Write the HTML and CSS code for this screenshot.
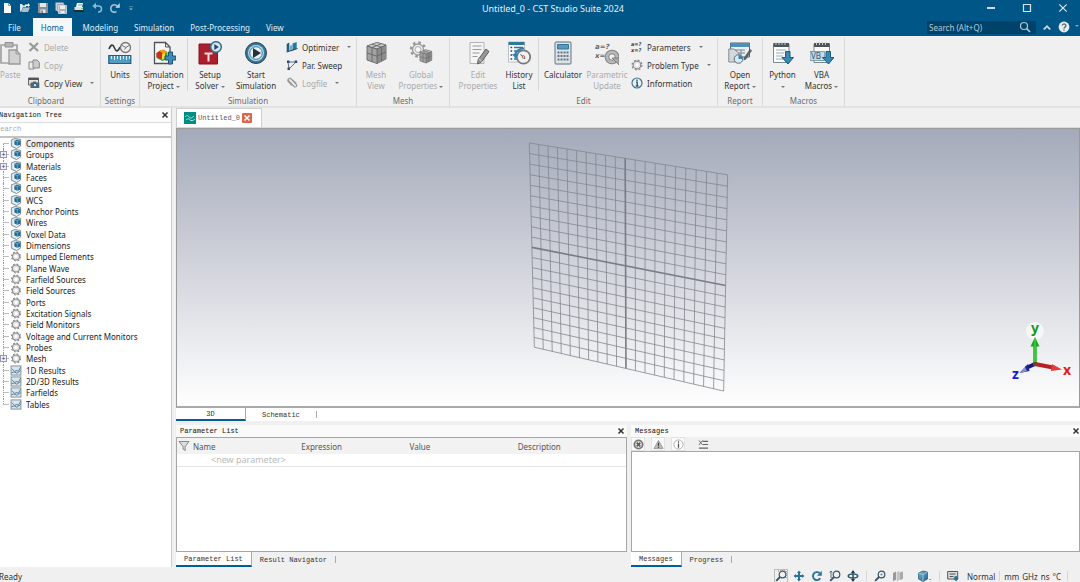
FILE: index.html
```html
<!DOCTYPE html>
<html lang="en">
<head>
<meta charset="utf-8">
<title>Untitled_0 - CST Studio Suite 2024</title>
<link rel="stylesheet" href="styles.css">
</head>
<body>
<svg class="defs" aria-hidden="true">
  <defs>
    <linearGradient id="steel" x1="0" y1="0" x2="1" y2="1"><stop offset="0" stop-color="#7db4d2"/><stop offset="1" stop-color="#1d628c"/></linearGradient>
  </defs>
  <symbol id="cube" viewBox="0 0 12 12">
    <path d="M1 2l4-1.400 6 1v7.200L6.500 11.500 1 9z" fill="#eaf1f5" stroke="#67747d" stroke-width=".9"/>
    <path d="M4.200 3l2.600-1.200 4 .8v4.800L7.300 8.500 4.200 7z" fill="#226b94"/>
    <path d="M4.200 3l3.200.9 3.400-1.300M7.400 4v4.400" fill="none" stroke="#8cc3dd" stroke-width=".7"/>
    <path d="M1.500 2.600v6L6 10.800" fill="none" stroke="#9fb3c0" stroke-width=".6"/>
  </symbol>
  <symbol id="gear" viewBox="0 0 12 12">
    <circle cx="6" cy="6" r="4.900" fill="none" stroke="#8b8b8b" stroke-width="1.300" stroke-dasharray="1.950 1.898"/>
    <circle cx="6" cy="6" r="3.800" fill="#f4f4f4" stroke="#8b8b8b" stroke-width="1.200"/>
    <circle cx="6" cy="6" r="2.300" fill="#fff" stroke="#c4c4c4" stroke-width=".6"/>
  </symbol>
  <symbol id="plot" viewBox="0 0 12 12">
    <rect x=".6" y="1" width="10.800" height="10" fill="#dbe4ea" stroke="#73808a" stroke-width=".9"/>
    <path d="M1.500 4l3 3L7 6l1.500 1L11 2.500M1 8.500l3-1 3 1.500 4-3" fill="none" stroke="#39708e" stroke-width=".9"/>
  </symbol>
  <symbol id="meshcube" viewBox="0 0 24 24">
    <path d="M3 5l10-3.500 9 2.500v14L13 22.500 3 19z" fill="#a2a2a2" stroke="#707070"/>
    <path d="M3 5l10-3.500L22 4l-9 4z" fill="#cecece" stroke="#777" stroke-width=".7"/>
    <path d="M13 8l9-4v14l-9 4.500z" fill="#8b8b8b"/>
    <path d="M3 5l10 3 9-4M13 8v14.500M3 12l10 3.200 9-4.300M8 6.500V21M17.500 6v14M8 3.300L17.500 6M17.500 2.700L8 6.500" fill="none" stroke="#666" stroke-width=".9"/>
  </symbol>
  <symbol id="lens" viewBox="0 0 12 12">
    <circle cx="7.500" cy="4.500" r="3.300" fill="none" stroke="currentColor" stroke-width="1.200"/>
    <path d="M5 7L1.200 10.800" stroke="currentColor" stroke-width="1.900"/>
  </symbol>
  <symbol id="cross" viewBox="0 0 8 8"><path d="M1.500 1.500l5 5m0-5l-5 5" stroke="currentColor" stroke-width="1.500"/></symbol>
</svg>

<div class="app">
  <header class="titlebar">
    <div class="quick">
      <button aria-label="New"><svg viewBox="0 0 12 12"><path d="M3 1h4.500L10 3.500V11H3z" fill="#fff"/><path d="M7.500 1v2.500H10" fill="none" stroke="#789" stroke-width=".8"/></svg></button>
      <button aria-label="Open"><svg viewBox="0 0 12 12"><path d="M1 2h2l1 1.500h3V5H4L2 10 1 9z" fill="#dfe7ed"/><path d="M4 5.500h7L9 10H2.500z" fill="#aebfcb"/><path d="M6 4V2.500h3V1l2 2.300L9 5V4z" fill="#fff"/></svg></button>
      <button aria-label="Save"><svg viewBox="0 0 12 12"><path d="M1 1h10v10H1z" fill="#8a9299"/><path d="M3 1h6v4H3zM3.500 7.500h5V11h-5z" fill="#e5e9ec"/><path d="M4.500 8.500h1.200V11H4.500z" fill="#555"/></svg></button>
      <button aria-label="Save all"><svg viewBox="0 0 12 12"><path d="M.5.500h8v8h-8z" fill="#c3c9ce"/><path d="M2 2h7v7H2z" fill="#8a9299" stroke="#dde" stroke-width=".6"/><path d="M3.500 3.500h8v8h-8z" fill="#aab2b9" stroke="#eee" stroke-width=".7"/><path d="M5 4h5v3H5zM5.500 9h4v2h-4z" fill="#eee"/></svg></button>
      <button aria-label="Print"><svg viewBox="0 0 12 12"><path d="M4 1h6L9 5H3z" fill="#fff"/><path d="M1.500 5H10v4H1.500z" fill="#d9dfe3"/><path d="M1 8h10v2H1z" fill="#1e2d38"/><path d="M8 6h2v1H8z" fill="#5d5"/><path d="M5 3h4" stroke="#456" stroke-width=".7"/></svg></button>
      <button aria-label="Undo"><svg viewBox="0 0 12 12"><path d="M3.500 4h4a2.700 2.700 0 010 6H7" fill="none" stroke="#8db9d5" stroke-width="1.500"/><path d="M5 .8L1.300 4 5 7z" fill="#8db9d5"/></svg></button>
      <button aria-label="Redo"><svg viewBox="0 0 12 12"><path d="M9 5.500A3.700 3.700 0 107.500 9.600" fill="none" stroke="#a4c2d5" stroke-width="1.600"/><path d="M10.800 1v4.700H6.300z" fill="#b9d0de"/></svg></button>
      <button class="narrow" aria-label="Customize"><svg viewBox="0 0 12 12"><path d="M3 4h6M4 7h4L6 9z" fill="#8fb3c9" stroke="#8fb3c9" stroke-width=".8"/></svg></button>
    </div>
    <h1>Untitled_0 - CST Studio Suite 2024</h1>
    <div class="window-buttons">
      <button aria-label="Minimize"><svg viewBox="0 0 10 10"><path d="M1 5h8" stroke="#fff" stroke-width="1.600"/></svg></button>
      <button aria-label="Maximize"><svg viewBox="0 0 10 10"><path d="M1.500 1.500h7v7h-7z" fill="none" stroke="#d7e6f0" stroke-width="1.200"/></svg></button>
      <button aria-label="Close"><svg viewBox="0 0 10 10"><path d="M1.300 1.300l7.400 7.400m0-7.400L1.300 8.700" stroke="#d7e6f0" stroke-width="1.200"/></svg></button>
    </div>
  </header>

  <nav class="menubar">
    <button>File</button>
    <button class="current">Home</button>
    <button>Modeling</button>
    <button>Simulation</button>
    <button>Post-Processing</button>
    <button>View</button>
    <div class="find">
      <input type="text" aria-label="Search" placeholder="Search (Alt+Q)">
      <svg viewBox="0 0 12 12"><circle cx="5" cy="5" r="3.500" fill="none" stroke="#b5c8d4" stroke-width="1.200"/><path d="M7.700 7.700L11 11" stroke="#b5c8d4" stroke-width="1.700"/></svg>
    </div>
    <button class="mini" aria-label="Collapse ribbon"><svg viewBox="0 0 12 12"><path d="M2 8l4-4 4 4-1.500 1L6 6.500 3.500 9z" fill="#c6d7e2"/></svg></button>
    <button class="mini" aria-label="Help"><svg viewBox="0 0 12 12"><circle cx="6" cy="6" r="5.400" fill="#e8edf0"/><path d="M4.300 4.600a1.800 1.700 0 113 1.300Q6 6.600 6 7.500M6 8.500v1.300" fill="none" stroke="#4b6578" stroke-width="1.300"/></svg></button>
    <span class="more"></span>
  </nav>

  <section class="ribbon" aria-label="Home ribbon">
    <div class="group clipboard">
      <div class="tools">
        <button class="big off"><svg viewBox="0 0 24 24"><path d="M3 4h16v18H3z" fill="#efefef" stroke="#a2a2a2" stroke-width="1.700"/><path d="M7 1.500h8V6H7z" fill="#b5b5b5" stroke="#919191"/><path d="M11 9h7l4 4v10H11z" fill="#d2d2d2" stroke="#999" stroke-width="1.300"/><path d="M18 9v4h4" fill="none" stroke="#999"/></svg>Paste</button>
        <div class="stack">
          <button class="off"><svg viewBox="0 0 12 12"><path d="M1.500 2l8.500 8M10 2L1.500 10" stroke="#999" stroke-width="2.200"/></svg>Delete</button>
          <button class="off"><svg viewBox="0 0 12 12"><path d="M1 3h5v7H1z" fill="#eee" stroke="#888"/><path d="M5 1h4l2.300 2.300V9H5z" fill="#ccc" stroke="#888"/></svg>Copy</button>
          <button><svg viewBox="0 0 12 12"><path d="M.5 1h10v7H.5z" fill="#e2e2e2" stroke="#666"/><path d="M.5 1h10v2H.5z" fill="#555"/><path d="M2.500 5.500h2l.7-1h2.600l.7 1h2.800V11H2.500z" fill="#56656f"/><circle cx="7" cy="8.200" r="1.800" fill="#cfe4ef" stroke="#1d638f"/></svg>Copy View<i class="caret far"></i></button>
        </div>
      </div>
      <h2>Clipboard</h2>
    </div>
    <div class="group settings">
      <div class="tools">
        <button class="big"><svg viewBox="0 0 24 24"><path d="M1 8c2-5 4-5 5.500-1S10 11 12 6" fill="none" stroke="#303b43" stroke-width="1.600"/><circle cx="17.500" cy="6.500" r="5" fill="#eee" stroke="#767676" stroke-width="1.300"/><path d="M14 4.500l4 2 3-2M18 6.500l-1.500 2" fill="none" stroke="#777"/><path d="M.8 14.500h22v8H.8z" fill="#549ac0" stroke="#235c7d" stroke-width="1.200"/><path d="M3.500 15v3m3-3v4m3-4v3m3-3v4m3-4v3m3-3v4m3-4v3" stroke="#d7ecf7"/></svg>Units</button>
      </div>
      <h2>Settings</h2>
    </div>
    <div class="group simulation">
      <div class="tools">
        <button class="big project"><svg viewBox="0 0 24 24"><path d="M2.500 1.500h11L18 6v16.500H2.500z" fill="#f7f7f7" stroke="#4d5357" stroke-width="1.300"/><path d="M13.500 1.500V6H18" fill="none" stroke="#4d5357"/><path d="M4.500 12l5-3 6 2v7l-5 2-6-3z" fill="#32a34d"/><path d="M4.500 12l3-2 3 2v5l-3 1-3-2z" fill="#d82920"/><path d="M7 9.500l5-1 3.500 2.500-4 2z" fill="#ee9b19"/><path d="M10 13l3-1v5l-3 2z" fill="#f1dd2b"/><path d="M16.500 11h4v4h3.300v4h-3.300v4h-4v-4H13v-4h3.500z" fill="#3f8bb5" stroke="#1c5272"/></svg>Simulation<br>Project <i class="caret"></i></button>
        <button class="big setup"><svg viewBox="0 0 24 24"><path d="M1 3h18.500v20H1z" fill="#aa1f2b" stroke="#87131e"/><path d="M6.500 11.500h8v2h-3v7H9.500v-7h-3z" fill="#f7dfe0"/><circle cx="18" cy="6" r="5.300" fill="#d5e6ef" stroke="#386f91" stroke-width="1.500"/><path d="M16.300 3l4.500 3-4.500 3z" fill="#234d66"/></svg>Setup<br>Solver <i class="caret"></i></button>
        <button class="big start"><svg viewBox="0 0 24 24"><circle cx="12" cy="12" r="10.500" fill="#337aa1" stroke="#343d43"/><circle cx="12" cy="12" r="8" fill="#b4dcec"/><circle cx="12" cy="12" r="6.300" fill="#e8f1f5" stroke="#3b7694"/><path d="M9 7l8 5-8 5z" fill="#263238"/></svg>Start<br>Simulation</button>
        <div class="stack">
          <button><svg viewBox="0 0 12 12"><path d="M.7 3l2.600-1.500V10L.7 11z" fill="#1f5d80"/><path d="M4 5l2-1v5.500L4 10.500z" fill="#68a9c9"/><path d="M6.500 2.500L10.700 1v6.500L6.500 10z" fill="#247aa5"/><path d="M.7 11L11.500 7.500" stroke="#345"/></svg>Optimizer<i class="caret far"></i></button>
          <button><svg viewBox="0 0 12 12"><path d="M2 3h8L3 10z" fill="none" stroke="#52616b" stroke-width=".9"/><path d="M1 1.500h2.500V4H1zM8.700 1.500h2.500V4H8.700zM1.500 8.500H4V11H1.500z" fill="#234c7e"/></svg>Par. Sweep</button>
          <button class="off"><svg viewBox="0 0 12 12"><path d="M1.500 2.500l6.500 7a1.500 1.500 0 002.300-2L5 1.800A2 2 0 002.200 4.500L6 8.500M4 1l6.500 5.500" fill="none" stroke="#999" stroke-width="1.200"/></svg>Logfile<i class="caret far"></i></button>
        </div>
      </div>
      <h2>Simulation</h2>
    </div>
    <div class="group mesh">
      <div class="tools">
        <button class="big off"><svg><use href="#meshcube"/></svg>Mesh<br>View</button>
        <button class="big off wide"><svg viewBox="0 0 24 24"><circle cx="9" cy="8.500" r="7" fill="none" stroke="#9a9a9a" stroke-width="2.500" stroke-dasharray="2.700 2.798"/><circle cx="9" cy="8.500" r="5.500" fill="#eee" stroke="#999" stroke-width="1.300"/><circle cx="9" cy="8.500" r="3" fill="#f5f5f5" stroke="#aaa"/><use href="#meshcube" x="9" y="7.500" width="15" height="16"/></svg>Global<br>Properties <i class="caret"></i></button>
      </div>
      <h2>Mesh</h2>
    </div>
    <div class="group edit">
      <div class="tools">
        <button class="big off"><svg viewBox="0 0 24 24"><path d="M4 1.500h14v21H4z" fill="#f5f5f5" stroke="#b4b4b4"/><path d="M6.500 5h9m-9 3.500h9m-9 3.500h7m-7 3.500h5" stroke="#9a9a9a" stroke-width="1.200"/><path d="M20 8l3 2.500L15.500 21l-4 2 .7-4.500z" fill="#969696" stroke="#606060"/><path d="M13 18l2.500 2" stroke="#ddd"/></svg>Edit<br>Properties</button>
        <button class="big history"><svg viewBox="0 0 24 24"><path d="M1.500 1h16v20h-16z" fill="#fafafa" stroke="#b8bec2"/><path d="M1.500 1h16v3h-16z" fill="#2d789f"/><path d="M7 6.500h9M7 10h7M7 14h3M7 18h3" stroke="#41718b" stroke-width="1.300"/><path d="M3.500 6.500h1.700M3.500 10h1.700M3.500 14h1.700M3.500 18h1.700" stroke="#303d45" stroke-width="1.500"/><circle cx="16.500" cy="16" r="6.700" fill="#f0f1f1" stroke="#777" stroke-width="1.700"/><path d="M8 14a8.500 8.500 0 019-6.500" fill="none" stroke="#2a83b0" stroke-width="2"/><path d="M5 13h6.500l-3 4.500z" fill="#2a83b0"/><path d="M13.500 13.500l3 2.500 1.500 2" fill="none" stroke="#484848"/><circle cx="16.500" cy="16" r="1.300" fill="#eee" stroke="#833" stroke-width=".7"/></svg>History<br>List</button>
        <button class="big calc"><svg viewBox="0 0 24 24"><rect x="4" y="1" width="16" height="22" rx="1.500" fill="#dce4e9" stroke="#8996a0" stroke-width="1.400"/><path d="M6.500 3.500h11V8h-11z" fill="#5799bd" stroke="#34779d"/><path d="M6.500 10.500h2v2h-2zm3 0h2v2h-2zm3 0h2v2h-2zm3 0h2v2h-2zm-9 3.500h2v2h-2zm3 0h2v2h-2zm3 0h2v2h-2zm3 0h2v2h-2zm-9 3.500h2v2h-2zm3 0h2v2h-2zm3 0h2v2h-2zm3 0h2v2h-2z" fill="#667782"/></svg>Calculator</button>
        <button class="big off parametric"><svg viewBox="0 0 24 24"><text x="0" y="8" class="formula">a=?</text><text x="0" y="17" class="formula">x=</text><circle cx="17" cy="16" r="5" fill="none" stroke="#777" stroke-width="4.600"/><circle cx="17" cy="16" r="5" fill="none" stroke="#b8b8b8" stroke-width="3"/><path d="M17 17h7v7z" fill="#aaa" stroke="#777" stroke-width=".8"/></svg>Parametric<br>Update</button>
        <div class="stack">
          <button><svg viewBox="0 0 12 12"><text x="0" y="5" class="formula tiny">a=?</text><text x="0" y="11" class="formula tiny">x=?</text></svg>Parameters<i class="caret far"></i></button>
          <button><svg><use href="#gear"/></svg>Problem Type<i class="caret far"></i></button>
          <button><svg viewBox="0 0 12 12"><circle cx="6" cy="6" r="5" fill="#e8f1f5" stroke="#4c7189" stroke-width="1.200"/><path d="M6 2.500v1.500M5 5.200h1.200v3.500M4.700 9h2.800" fill="none" stroke="#1e5275" stroke-width="1.300"/></svg>Information</button>
        </div>
      </div>
      <h2>Edit</h2>
    </div>
    <div class="group report">
      <div class="tools">
        <button class="big"><svg viewBox="0 0 24 24"><path d="M2.500 2h19v14h-19z" fill="#e9edf0" stroke="#59646c"/><path d="M2.500 2h19v4h-19z" fill="#4b91b8"/><path d="M6 9h11m-11 3h11m-9-3v6m5-6v6" stroke="#77838b"/><path d="M.8 8h5l5 4v9h-10z" fill="#d4d8dc" stroke="#858b8f"/><circle cx="10.500" cy="18" r="4.300" fill="#dbe8ef" stroke="#56707f"/><path d="M10.500 18v-4a4 4 0 014 4z" fill="#3b84ad"/><path d="M22 8l2 1.500-6 9-2.500 1 .5-3z" fill="#55626a"/></svg>Open<br>Report <i class="caret"></i></button>
      </div>
      <h2>Report</h2>
    </div>
    <div class="group macros">
      <div class="tools">
        <button class="big"><svg viewBox="0 0 24 24"><path d="M2.500 3h15.500v18.500H2.500z" fill="#fbfbfb" stroke="#7c878e"/><path d="M2.500 2h15.500v4H2.500z" fill="#4c555b"/><path d="M5 1v3m3-3v3m3-3v3m3-3v3" stroke="#c9ced1"/><path d="M5 9h10M5 12h8M5 15h7M5 18h7" stroke="#9aabb5"/><path d="M14.500 10.500h4.500v6h3.500L17 23l-6-6.500h3.500z" fill="#3989b5" stroke="#1e5a7c"/></svg>Python<br><i class="caret"></i></button>
        <button class="big vba"><svg viewBox="0 0 24 24"><path d="M4 3h15.500v18.500H4z" fill="#fbfbfb" stroke="#7c878e"/><path d="M4 2h15.500v4H4z" fill="#4c555b"/><path d="M6.500 1v3m3-3v3m3-3v3m3-3v3" stroke="#c9ced1"/><path d="M0 10.500h14.500v9H0z" fill="#c7d9e5" stroke="#5c7f96" stroke-width=".7"/><text x="1" y="18" class="vb">VB</text><path d="M16 10.500h4.500v6H24L18.500 23l-6-6.500H16z" fill="#3989b5" stroke="#1e5a7c"/></svg>VBA<br>Macros <i class="caret"></i></button>
      </div>
      <h2>Macros</h2>
    </div>
  </section>

  <main class="workspace">
    <aside class="navigation">
      <header class="pane-title"><h2>Navigation Tree</h2><button aria-label="Close navigation tree"><svg><use href="#cross"/></svg></button></header>
      <input type="text" aria-label="Search tree" placeholder="Search">
      <ul class="tree">
        <li class="selected"><svg><use href="#cube"/></svg><span>Components</span></li>
        <li><button aria-label="Expand Groups">+</button><svg><use href="#cube"/></svg><span>Groups</span></li>
        <li><button aria-label="Expand Materials">+</button><svg><use href="#cube"/></svg><span>Materials</span></li>
        <li><svg><use href="#cube"/></svg><span>Faces</span></li>
        <li><svg><use href="#cube"/></svg><span>Curves</span></li>
        <li><svg><use href="#cube"/></svg><span>WCS</span></li>
        <li><svg><use href="#cube"/></svg><span>Anchor Points</span></li>
        <li><svg><use href="#cube"/></svg><span>Wires</span></li>
        <li><svg><use href="#cube"/></svg><span>Voxel Data</span></li>
        <li><svg><use href="#cube"/></svg><span>Dimensions</span></li>
        <li><svg><use href="#gear"/></svg><span>Lumped Elements</span></li>
        <li><svg><use href="#gear"/></svg><span>Plane Wave</span></li>
        <li><svg><use href="#gear"/></svg><span>Farfield Sources</span></li>
        <li><svg><use href="#gear"/></svg><span>Field Sources</span></li>
        <li><svg><use href="#gear"/></svg><span>Ports</span></li>
        <li><svg><use href="#gear"/></svg><span>Excitation Signals</span></li>
        <li><svg><use href="#gear"/></svg><span>Field Monitors</span></li>
        <li><svg><use href="#gear"/></svg><span>Voltage and Current Monitors</span></li>
        <li><svg><use href="#gear"/></svg><span>Probes</span></li>
        <li><button aria-label="Expand Mesh">+</button><svg><use href="#gear"/></svg><span>Mesh</span></li>
        <li><svg><use href="#plot"/></svg><span>1D Results</span></li>
        <li><svg><use href="#plot"/></svg><span>2D/3D Results</span></li>
        <li><svg><use href="#plot"/></svg><span>Farfields</span></li>
        <li><svg><use href="#plot"/></svg><span>Tables</span></li>
      </ul>
    </aside>

    <div class="documents">
      <div class="doc-tabs">
        <div class="doc-tab">
          <svg viewBox="0 0 12 12"><path d="M0 0h12v12H0z" fill="#008d83"/><path d="M1 5c2-2 3-2 4 0s3 1 5-1M2 8c2-2 3-1 4 0s3 1 5-1" fill="none" stroke="#a9e5df"/></svg>
          <span>Untitled_0</span>
          <button aria-label="Close document"><svg><use href="#cross"/></svg></button>
        </div>
      </div>
      <div class="viewport">
        <svg id="plane" viewBox="177 129 902 278" role="img" aria-label="Working plane"></svg>
        <svg class="axes" viewBox="0 0 70 70" role="img" aria-label="Coordinate axes">
          <circle cx="28" cy="14" r="9" fill="#fff" opacity=".6"/>
          <path d="M28 47V29" stroke="#1db520" stroke-width="3.500"/><path d="M28 20l4.500 9.500h-9z" fill="#16a91a"/><path d="M28 21v25" stroke="#72df72" stroke-width=".8"/>
          <path d="M28 47l18 3.500" stroke="#b72025" stroke-width="4"/><path d="M45 47l10 5.500-11 1.500z" fill="#e33b3e"/>
          <path d="M28 47l-9 4" stroke="#15177c" stroke-width="4"/><path d="M21 47l1.500 7-10 2z" fill="#20259a"/><path d="M13 56l5-6 2 4z" fill="#8990cc"/><circle cx="28" cy="47" r="2.200" fill="#742"/>
          <text x="24" y="16" fill="#159a1c">y</text><text x="56" y="58" fill="#e3191d">x</text><text x="5" y="62" fill="#1518dd">z</text>
        </svg>
      </div>
      <div class="tabs view-tabs"><button class="current">3D</button><button>Schematic</button></div>

      <div class="docks">
        <section class="parameters">
          <header class="pane-title"><h2>Parameter List</h2><button aria-label="Close parameter list"><svg><use href="#cross"/></svg></button></header>
          <div class="sheet">
            <table>
              <thead><tr><th class="filter"><svg viewBox="0 0 12 12"><path d="M1 1.500h10L7.200 6.500v4L5 9V6.500z" fill="#ddd" stroke="#888"/></svg></th><th>Name</th><th>Expression</th><th>Value</th><th>Description</th></tr></thead>
              <tbody><tr><td></td><td class="new">&lt;new parameter&gt;</td><td></td><td></td><td></td></tr></tbody>
            </table>
          </div>
          <div class="tabs"><button class="current">Parameter List</button><button>Result Navigator</button></div>
        </section>
        <section class="messages">
          <header class="pane-title"><h2>Messages</h2><button aria-label="Close messages"><svg><use href="#cross"/></svg></button></header>
          <div class="filters">
            <button aria-label="Errors"><svg viewBox="0 0 12 12"><circle cx="6" cy="6" r="5.500" fill="#777"/><circle cx="6" cy="6" r="3.500" fill="#eee"/><path d="M4 4l4 4m0-4L4 8" stroke="#555" stroke-width="1.700"/></svg></button>
            <button aria-label="Warnings"><svg viewBox="0 0 12 12"><path d="M6 1.500l5 9H1z" fill="#bbb" stroke="#999"/><path d="M6 4v3.500M6 8.500v1.200" stroke="#444" stroke-width="1.300"/></svg></button>
            <button aria-label="Information"><svg viewBox="0 0 12 12"><circle cx="6" cy="6" r="5" fill="#fff" stroke="#aaa"/><path d="M6 2.500V4M6 5v4.500" stroke="#555" stroke-width="1.400"/></svg></button>
            <button class="clear" aria-label="Clear messages"><svg viewBox="0 0 12 12"><path d="M5 2.500h6M5.500 6H11M1 10h10" stroke="#666" stroke-width="1.300"/><path d="M1 1.500l4 5M5 1.500l-4 5" stroke="#666"/></svg></button>
          </div>
          <div class="log"></div>
          <div class="tabs"><button class="current">Messages</button><button>Progress</button></div>
        </section>
      </div>
    </div>
  </main>

  <footer class="status">
    <span class="ready">Ready</span>
    <button class="pressed" aria-label="Zoom window"><svg class="dark"><use href="#lens"/><path d="M3 1h8v8" fill="none" stroke="#777" stroke-dasharray="1 1"/></svg></button>
    <button aria-label="Pan"><svg viewBox="0 0 12 12"><path d="M6 .5l2 2.500H7v2h2V4l2.500 2L9 8V7H7v2h1l-2 2.500L4 9h1V7H3v1L.5 6 3 4v1h2V3H4z" fill="#2d7199"/></svg></button>
    <button aria-label="Rotate"><svg viewBox="0 0 12 12"><path d="M9.300 8.300A4 4 0 118.500 3" fill="none" stroke="#2d7199" stroke-width="1.900"/><path d="M10.800.8v5H6z" fill="#2d7199"/></svg></button>
    <button aria-label="Dynamic zoom"><svg class="dark"><use href="#lens"/><path d="M2 1v7M.8 2.500L2 1l1.200 1.500" fill="none" stroke="currentColor" stroke-width=".8"/></svg></button>
    <button aria-label="Rotate plane"><svg viewBox="0 0 12 12"><path d="M6 1v10" stroke="#263b48" stroke-width="1.400"/><path d="M6 0l2 3H4zM6 12l2-3H4z" fill="#263b48"/><ellipse cx="6" cy="6" rx="4.700" ry="2" fill="none" stroke="#315b73" stroke-width="1.600"/></svg></button>
    <i class="divider"></i>
    <button aria-label="Reset view"><svg class="dark"><use href="#lens"/><circle cx="7.500" cy="4.500" r="1" fill="#58a"/></svg></button>
    <button aria-label="Cutting plane"><svg viewBox="0 0 12 12"><path d="M1 3l3-1.500V10L1 11z" fill="#999"/><path d="M5 2.500l2-1v8l-2 1z" fill="#ccc" stroke="#aaa" stroke-width=".5"/><path d="M7.500 2.500l3.500-1V9l-3.500 1z" fill="#aaa"/></svg></button>
    <button class="shape" aria-label="Shape view"><svg viewBox="0 0 12 12"><path d="M1.500 3L6 1l4.500 1v7L6 11.500 1.500 9z" fill="url(#steel)" stroke="#24566f" stroke-width=".7"/><path d="M1.500 3L6 4.500l4.500-2.500M6 4.500v7" fill="none" stroke="#bde0ef" stroke-width=".7"/></svg>.</button>
    <i class="divider"></i>
    <button aria-label="Selection mode"><svg viewBox="0 0 12 12"><path d="M.7 1.500h10V9H.7z" fill="#ddd" stroke="#555"/><path d="M2.500 4h6m-6 2.500h4" stroke="#555"/><path d="M6.500 8.500h5L9 11.500z" fill="#2d7199"/><circle cx="9" cy="8" r="2" fill="#2d7199"/></svg></button>
    <span class="mode">Normal</span>
    <i class="divider tight"></i>
    <div class="units"><span>mm</span><span>GHz</span><span>ns</span><span>°C</span></div>
    <i class="divider last"></i>
  </footer>
</div>
<script src="plane.js"></script>
</body>
</html>
```
FILE: styles.css
```css
* { box-sizing: border-box; }
body { margin: 0; background: #f0f0f0; color: #333; font: 8px/11px "Noto Sans", "Open Sans", sans-serif; }
button { display: flex; align-items: center; border: 0; padding: 0; background: none; color: inherit; font: inherit; }
h1, h2 { margin: 0; font: inherit; }
svg { display: block; flex: none; width: 12px; height: 12px; }
.defs { position: absolute; width: 0; height: 0; }
.app { display: flex; flex-direction: column; height: 100vh; overflow: hidden; }

.titlebar { display: grid; grid-template-columns: 1fr auto 1fr; align-items: center; height: 18px; padding-right: 12px; background: #005687; color: #e6f0f6; }
.titlebar h1 { font-size: 9px; padding: 0 0 2px 38px; }
.quick { display: flex; gap: 6px; padding: 0 0 3px 1px; }
.quick .narrow svg { width: 8px; }
.window-buttons { display: flex; justify-content: flex-end; gap: 26px; padding-bottom: 3px; }
.window-buttons svg { width: 10px; height: 10px; }

.menubar { display: flex; align-items: center; height: 18px; background: #005687; color: #e1edf4; }
.menubar > button { align-self: stretch; padding: 0 8px; }
.menubar > .current { background: #f5f7f8; color: #005c91; margin: 0 3px 0 4px; }
.find { display: flex; align-items: center; width: 109px; height: 13px; margin: 0 5px 0 auto; padding-right: 5px; background: #00426a; }
.find input { flex: 1; min-width: 0; border: 0; padding: 0 2px; background: none; font: inherit; outline: 0; }
.find input::placeholder { color: #b6cbd8; opacity: 1; }
.menubar > .mini { padding: 0; margin-right: 5px; }
.more { border: 2px solid transparent; border-top-color: #7fa5bd; margin-right: 1px; }

.ribbon { display: flex; height: 72px; padding: 2px 0 0; border-bottom: 2px solid #e2e2e2; background: #f0f0f0; }
.group { display: flex; flex-direction: column; border-right: 1px solid #d9d9d9; }
.group > h2 { margin-top: auto; text-align: center; color: #6c6c6c; line-height: 10px; }
.tools { display: flex; height: 56px; }
.big { display: block; width: 44px; padding-top: 3px; text-align: center; line-height: 11px; align-self: flex-start; white-space: nowrap; }
.big svg { width: 24px; height: 24px; margin: 0 auto 4px; }
.off { color: #aaa; }
.stack { display: flex; flex-direction: column; }
.stack button { height: 18px; gap: 4px; white-space: nowrap; }
.caret { display: inline-block; border: 2px solid transparent; border-top-color: #777; border-bottom: 0; vertical-align: middle; }
.caret.far { margin-left: 4px; }
.formula { font: italic bold 7px "DejaVu Sans", sans-serif; fill: #666; }
.tiny { font-size: 5px; fill: #333; }
.vb { font: 8px "Noto Sans", sans-serif; fill: #235b7e; }
.clipboard { width: 101px; }
.clipboard .big { width: 20px; text-align: left; }
.clipboard .big svg { margin-left: -2px; }
.clipboard .stack { margin-left: 8px; }
.clipboard h2 { padding-right: 8px; }
.settings { width: 39px; }
.settings .big { width: 38px; }
.simulation { width: 217px; }
.simulation .project { width: 48px; border-right: 1px solid #d5d5d5; }
.simulation .start { width: 48px; }
.simulation .stack { margin-left: 6px; }
.mesh { width: 93px; }
.mesh .big { width: 38px; }
.mesh .wide { width: 52px; }
.edit { width: 268px; }
.edit > .tools { padding-left: 6px; }
.edit .history { width: 39px; border-right: 1px solid #d5d5d5; }
.edit .calc { width: 46px; padding-left: 2px; }
.edit .stack { margin-left: 2px; }
.report { width: 45px; }
.macros { width: 82px; }
.macros .big { width: 39px; }

.workspace { display: grid; grid-template-columns: 172px minmax(0, 1fr); gap: 4px; flex: 1; min-height: 0; }
.pane-title { display: flex; align-items: center; justify-content: space-between; height: 12px; padding: 0 2px 0 4px; background: #fafafa; color: #111; font: 7px/11px "Liberation Mono", monospace; }
.pane-title svg { width: 8px; height: 8px; color: #333; }
.navigation { display: flex; flex-direction: column; min-height: 0; background: #fff; border-right: 1px solid #ccc; }
.navigation .pane-title { height: 14px; padding-left: 0; }
.navigation .pane-title h2 { margin-left: -1px; }
.navigation > input { flex: none; height: 12px; border: 0; border-top: 1px solid #ddd; padding: 0; text-indent: -4px; font: 7px "Liberation Mono", monospace; }
.navigation > input::placeholder { color: #aaa; opacity: 1; }
.tree { display: grid; grid-template-rows: repeat(24, minmax(0, 1fr)); flex: none; height: 274px; margin: 2px 0 0; padding: 0; border-top: 2px solid #c3c3c3; list-style: none; color: #222; }
.tree li { position: relative; display: flex; align-items: center; gap: 3px; padding-left: 10px; background: linear-gradient(90deg, transparent 3px, #bdbdbd 3px, #bdbdbd 9px, transparent 9px) center / 100% 1px no-repeat; }
.tree li::before { content: ""; position: absolute; left: 3px; top: 0; bottom: 0; border-left: 1px dotted #999; }
.tree li:first-child::before { top: 50%; }
.tree li:last-child::before { bottom: 50%; }
.tree li > svg { height: 11px; }
.tree li > button { position: absolute; left: 0; top: 2px; justify-content: center; width: 7px; height: 7px; border: 1px solid #9a9ab3; background: #f1f1f8; color: #336; font-size: 7px; line-height: 5px; }
.tree span { padding: 0 1px; line-height: 11px; }
.tree .selected span { background: #ededed; }

.documents { display: flex; flex-direction: column; min-width: 0; min-height: 0; }
.doc-tabs { display: flex; align-items: flex-end; height: 20px; border-bottom: 1px solid #d9d9d9; }
.doc-tab { display: flex; align-items: center; gap: 2px; height: 19px; padding: 0 9px 0 7px; border: 1px solid #cfcfcf; border-bottom: 0; background: #fff; color: #555; font: 7px "Liberation Mono", monospace; }
.doc-tab button { padding: 1px; border-radius: 1px; background: #dc674e; color: #fff; }
.doc-tab button svg { width: 8px; height: 8px; }
.viewport { position: relative; flex: 1; min-height: 0; border: 1px solid #9a9a9a; border-bottom: 2px solid #aaa; background: linear-gradient(#a4aaba, #d2d4dc 50%, #fff); }
#plane { width: 100%; height: 100%; }
.axes { position: absolute; right: 2px; bottom: 19px; width: 70px; height: 70px; }
.axes text { font: bold 14px "Noto Sans", sans-serif; }
.line { fill: none; stroke: #82868e; stroke-width: .8; }
.line.major { stroke: #777b84; stroke-width: 1.600; }

.tabs { display: flex; flex: none; height: 15px; font: 7px "Liberation Mono", monospace; color: #333; }
.tabs button { justify-content: center; padding: 0 8px; border-right: 1px solid transparent; }
.tabs .current { background: #fff; border-right-color: #aaa; border-bottom: 2px solid #005f99; }
.tabs button:last-child::after { content: ""; height: 7px; margin-left: 8px; border-right: 1px solid #aaa; }
.tabs button:last-child { padding-right: 0; }
.view-tabs { height: 13px; background: #fff; margin-bottom: 4px; }
.view-tabs button.current { width: 70px; }
.view-tabs button:last-child { padding-left: 16px; }
.view-tabs button:last-child::after { margin-left: 16px; }
.docks { display: grid; grid-template-columns: 451px minmax(0, 1fr); gap: 4px; height: 142px; }
.docks > section { display: flex; flex-direction: column; min-width: 0; }
.sheet, .log { flex: 1; border: 1px solid #a6a6a6; background: #fff; }
.messages .pane-title { padding-right: 0; }
table { width: 100%; border-collapse: collapse; table-layout: fixed; color: #555; }
th { height: 16px; padding: 0; background: #f2f2f2; font-weight: 400; text-align: left; }
th svg { margin-left: 1px; }
.filter { width: 16px; }
td { height: 12px; padding: 0; border-bottom: 1px solid #e6e6e6; line-height: 11px; }
.new { padding-left: 18px; color: #bbb; font-size: 9px; }
.filters { display: flex; gap: 6px; height: 14px; }
.filters button { justify-content: center; width: 14px; border: 1px solid #e2e2e2; background: #fafafa; }
.filters .clear { margin-left: 5px; border: 0; background: none; }
.filters svg { width: 11px; height: 11px; }

.status { display: flex; align-items: center; flex: none; gap: 4px; height: 15px; padding-top: 3px; color: #333; }
.status button { flex: none; width: 14px; justify-content: center; }
.ready { margin-right: auto; margin-left: -1px; }
.status .pressed { border: 1px solid #bbb; }
.dark { color: #365567; }
.divider { height: 10px; border-left: 1px solid #d5d5d5; margin: 0 2px; }
.divider.tight { margin: 0; }
.divider.last { margin-right: 12px; }
.status .shape { width: 18px; margin-left: 6px; }
.status .mode { margin-left: 3px; }
.units { display: flex; gap: 3px; }
```
FILE: plane.js
```js
// Draws the perspective working plane: 20 x 20 cells between four projected corners.
const corners = [[529, 143], [728, 175], [724, 392], [534, 348]];
const cells = 20;
const [[x0, y0], [x1, y1], [x2, y2], [x3, y3]] = corners;
const dx1 = x1 - x2, dx2 = x3 - x2, dx3 = x0 - x1 + x2 - x3;
const dy1 = y1 - y2, dy2 = y3 - y2, dy3 = y0 - y1 + y2 - y3;
const det = dx1 * dy2 - dx2 * dy1;
const g = (dx3 * dy2 - dx2 * dy3) / det;
const h = (dx1 * dy3 - dx3 * dy1) / det;

function project(u, v) {
  const w = g * u + h * v + 1;
  const x = ((x1 - x0 + g * x1) * u + (x3 - x0 + h * x3) * v + x0) / w;
  const y = ((y1 - y0 + g * y1) * u + (y3 - y0 + h * y3) * v + y0) / w;
  return x.toFixed(2) + " " + y.toFixed(2);
}

function addLine(from, to, major) {
  const path = document.createElementNS("http://www.w3.org/2000/svg", "path");
  path.setAttribute("d", "M" + from + "L" + to);
  path.setAttribute("class", major ? "line major" : "line");
  document.getElementById("plane").appendChild(path);
}

for (let i = 0; i <= cells; i++) {
  const t = i / cells;
  addLine(project(t, 0), project(t, 1), i === cells / 2);
  addLine(project(0, t), project(1, t), i === cells / 2);
}
```
